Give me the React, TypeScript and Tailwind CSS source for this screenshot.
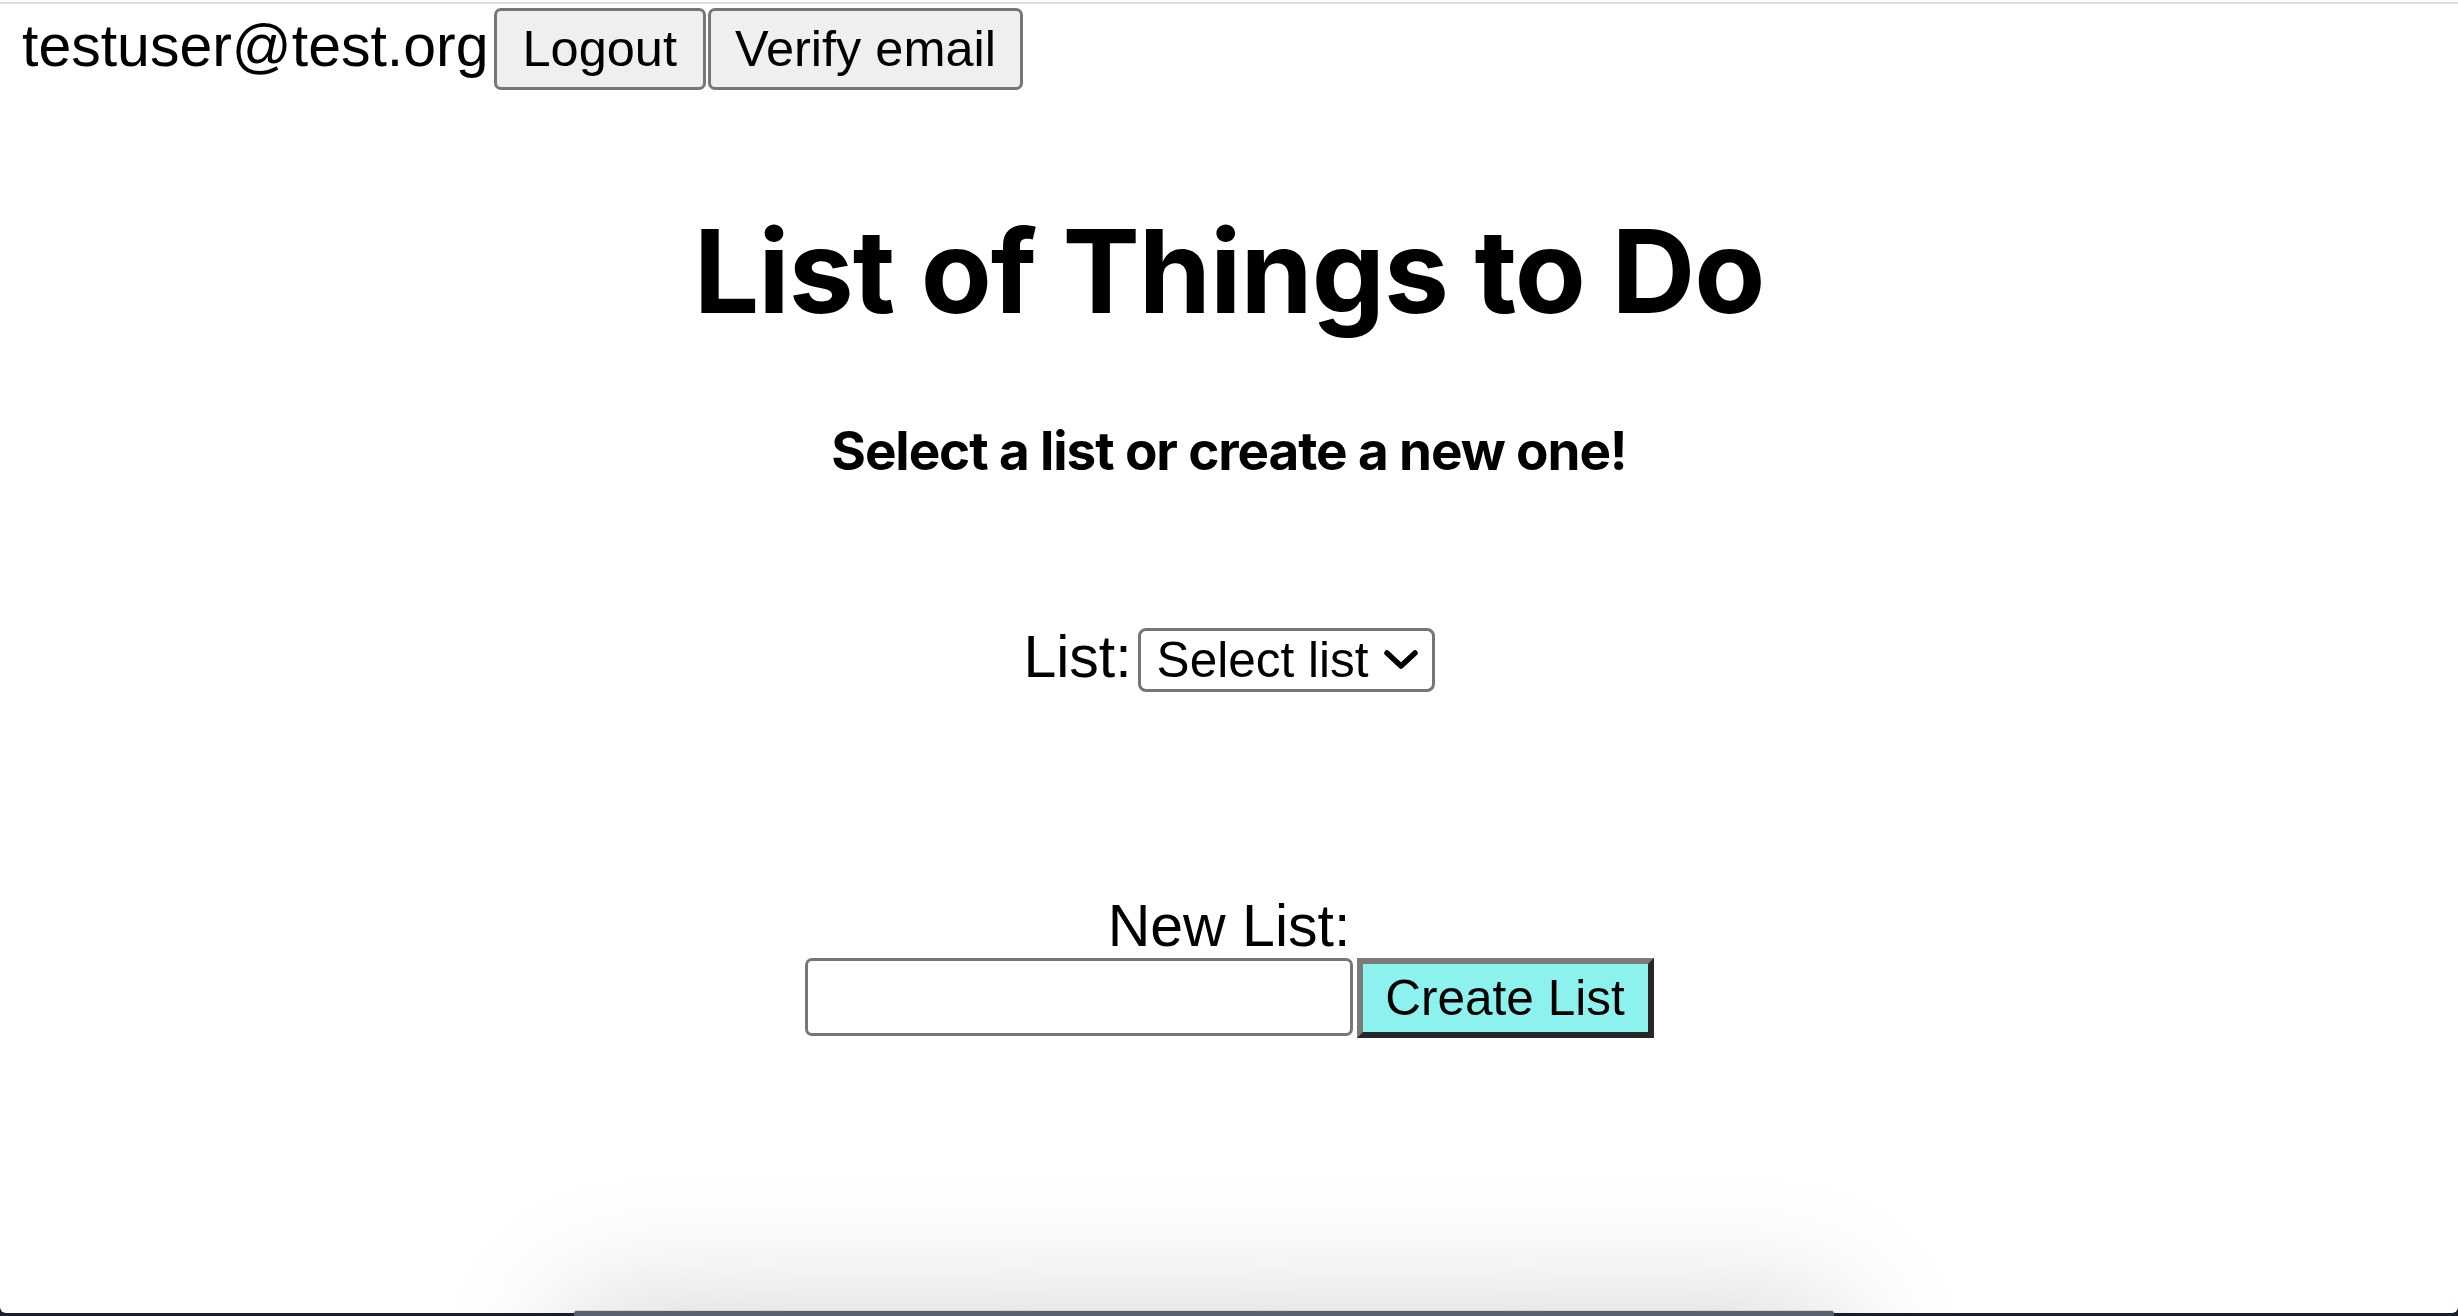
import React from "react";

const sans = { fontFamily: '"Liberation Sans", Arial, sans-serif' };

function Chevron() {
  return (
    <svg width="36" height="22" viewBox="0 0 36 22" fill="none">
      <path d="M4 4 L18 17 L32 4" stroke="#000" strokeWidth="5.5" strokeLinecap="round" strokeLinejoin="round" />
    </svg>
  );
}

export default function App() {
  return (
    <div className="relative w-[2458px] h-[1316px] overflow-hidden bg-[#1a202b]">
      <div className="h-[1313px] w-full bg-white rounded-b-[6px] flex flex-col">
        <div className="h-[2px] bg-white" />
        <div className="h-[2px] bg-[#dedede]" />
        <div className="mt-[4px] flex items-baseline pl-[22px] font-['Liberation_Sans',Arial,sans-serif] text-black">
          <span className="text-[59px] leading-[68px]">testuser@test.org</span>
          <button className="ml-[5px] h-[82px] px-[26px] border-[3px] border-[#767676] rounded-[7px] bg-[#efefef] text-[50.5px] leading-[56px] text-black">
            Logout
          </button>
          <button className="ml-[2px] h-[82px] px-[24px] border-[3px] border-[#767676] rounded-[7px] bg-[#efefef] text-[50.5px] leading-[56px] text-black">
            Verify email
          </button>
        </div>

        <h1 className="mt-[112px] text-center font-['Inter',sans-serif] font-bold text-[116px] leading-[139px] tracking-[-1px] text-black">
          List of Things to Do
        </h1>
        <p className="mt-[78px] text-center font-['Inter',sans-serif] font-bold text-[53px] leading-[64px] tracking-[-1.1px] text-black">
          Select a list or create a new one!
        </p>

        <div className="mt-[140px] flex items-baseline justify-center" style={sans}>
          <span className="text-[59px] leading-[68px] text-black">List:</span>
          <div className="ml-[6px] w-[297px] h-[64px] border-[3px] border-[#767676] rounded-[8px] bg-white flex items-center justify-between pl-[16px] pr-[13px]">
            <span className="text-[49.5px] leading-[56px] text-black">Select list</span>
            <Chevron />
          </div>
        </div>

        <div className="mt-[205px] text-center text-[59px] leading-[59px] text-black" style={sans}>
          New List:
        </div>
        <div className="mt-[2px] flex items-start justify-center" style={sans}>
          <div className="w-[548px] h-[78px] border-[3px] border-[#767676] rounded-[7px] bg-white" />
          <button className="ml-[4px] w-[297px] h-[80px] border-[6px] border-t-[#7b7b7b] border-l-[#7b7b7b] border-b-[#262626] border-r-[#262626] bg-[#8df2ee] text-[49.5px] leading-[56px] text-black">
            Create List
          </button>
        </div>
      </div>

      <div className="absolute left-[574px] top-[1310px] w-[1260px] h-[200px] bg-[#5b606e] border-t border-[#d6d6d6] rounded-t-[3px] shadow-[0_0_130px_10px_rgba(0,0,0,0.16)]" />
    </div>
  );
}
